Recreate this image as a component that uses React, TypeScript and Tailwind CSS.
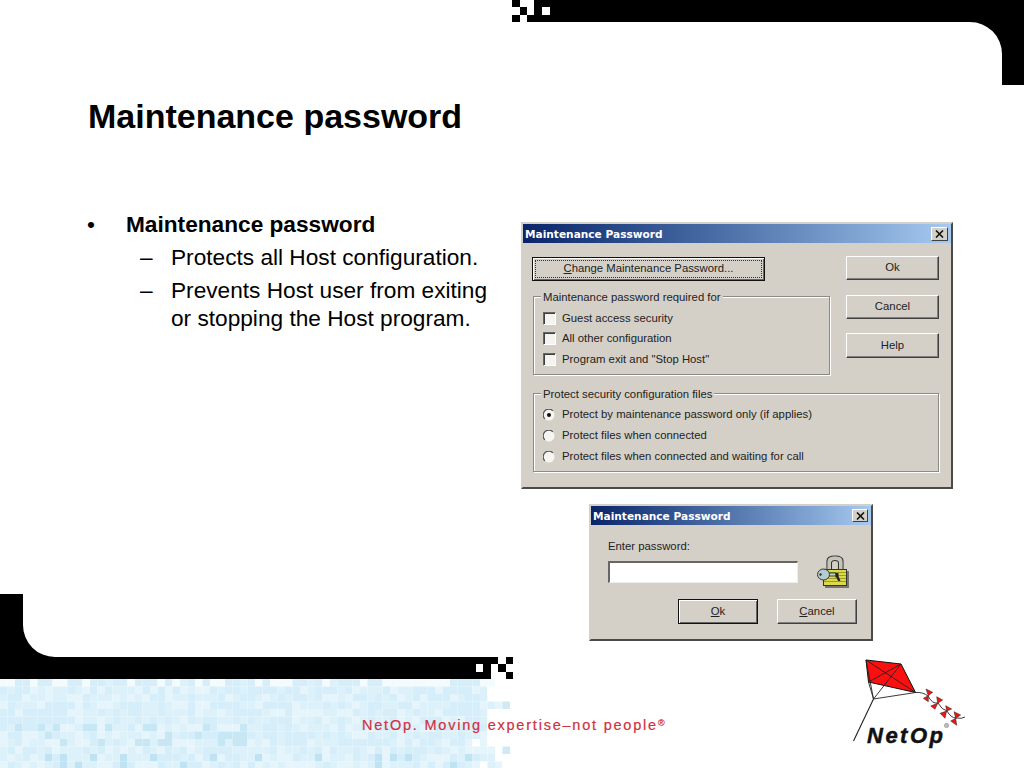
import type { ReactNode } from "react";

const ARIAL = "font-['Liberation_Sans',Arial,sans-serif]";

// pseudo random cells for the pale blue footer pattern
function footerCells() {
  const cells: { x: number; y: number; fill: string }[] = [];
  let seed = 17;
  const rnd = () => {
    seed = (seed * 9301 + 49297) % 233280;
    return seed / 233280;
  };
  for (let row = 0; row < 12; row++) {
    for (let col = 0; col < 69; col++) {
      const x = col * 7.5;
      const y = 679 + row * 7.5;
      const r = rnd();
      let fill = r < 0.4 ? "#d5eef9" : r < 0.75 ? "#dcf1fa" : "#e6f5fb";
      if (row === 0 && r > 0.5) fill = "#f4fbfd";
      if (row >= 10 && r < 0.25 && col % 2 === 0) fill = "#bfe3f2";
      if (col < 34 && row >= 6 && row < 9 && r < 0.2) fill = "#c8e7f4";
      if (x > 470) {
        const fade = (x - 470) / 30;
        if (x >= 500) fill = row % 2 === 1 && r < 0.45 ? "#cfe9f5" : "#ffffff";
        else if (r < fade) fill = "#ffffff";
      }
      cells.push({ x, y, fill });
    }
  }
  return cells;
}

function WinButton({ children, primary, className }: { children: ReactNode; primary?: boolean; className: string }) {
  return (
    <button
      className={`flex items-center justify-center text-[11.33px] leading-none text-[#222] bg-[#d4d0c8] ${
        primary
          ? "border border-[#111] shadow-[inset_1px_1px_0_#fff,inset_-1px_-1px_0_#666]"
          : "border-t border-l border-white border-r border-b border-r-[#404040] border-b-[#404040] shadow-[inset_-1px_-1px_0_#808080]"
      } ${className}`}
    >
      {children}
    </button>
  );
}

function TitleBar({ closeSize }: { closeSize: string }) {
  return (
    <div className="flex h-[19px] items-center justify-between bg-gradient-to-r from-[#0a246a] to-[#a6caf0] pl-[2px] pr-[3px]">
      <span className="pt-[1px] font-['DejaVu_Sans',sans-serif] text-[10.6px] font-bold leading-none text-white">
        Maintenance Password
      </span>
      <span className={`flex items-center justify-center border-t border-l border-white border-r border-b border-r-[#404040] border-b-[#404040] bg-[#d4d0c8] ${closeSize}`}>
        <svg width="9" height="8" viewBox="0 0 9 8">
          <path d="M1 0.5 L8 7.5 M8 0.5 L1 7.5" stroke="#111" strokeWidth="1.6" fill="none" />
        </svg>
      </span>
    </div>
  );
}

function GroupBox({ legend, className, children }: { legend: string; className: string; children: ReactNode }) {
  return (
    <div className={`relative border border-[#8c8a85] shadow-[inset_1px_1px_0_#fff,1px_1px_0_#fff] ${className}`}>
      <span className="absolute left-[7px] top-[-7px] bg-[#d4d0c8] px-[2px] text-[11.33px] leading-[14px] text-[#222]">
        {legend}
      </span>
      {children}
    </div>
  );
}

function CheckRow({ label }: { label: string }) {
  return (
    <div className="flex h-[20.5px] items-center gap-[6px] text-[11.33px] text-[#222]">
      <span className="h-[13px] w-[13px] border-t border-l border-[#666] border-r border-b border-r-white border-b-white bg-[#f4f3f0] shadow-[inset_1px_1px_0_#404040]" />
      <span>{label}</span>
    </div>
  );
}

function RadioRow({ label, checked }: { label: string; checked?: boolean }) {
  return (
    <div className="flex h-[21px] items-center gap-[7px] text-[11.33px] text-[#222]">
      <svg width="12" height="12" viewBox="0 0 12 12">
        <circle cx="6" cy="6" r="5.5" fill="#f6f5f2" />
        <path d="M1.8 9.8 A5.4 5.4 0 0 1 9.8 1.8" stroke="#555" strokeWidth="1.2" fill="none" />
        {checked && <circle cx="6" cy="6" r="2" fill="#111" />}
      </svg>
      <span>{label}</span>
    </div>
  );
}

function LockIcon() {
  return (
    <svg width="32" height="33" viewBox="0 0 32 33">
      <path d="M10 15 V6 Q10 1 18 1 Q26 1 26 6 V15" fill="none" stroke="#333" strokeWidth="1.1" />
      <path d="M14.5 15 V8 Q14.5 5.5 18 5.5 Q21.5 5.5 21.5 8 V15" fill="none" stroke="#333" strokeWidth="1.1" />
      <path d="M12.2 15 V6.8 Q12.2 3.2 18 3.2 Q23.8 3.2 23.8 6.8 V15" fill="none" stroke="#c4c4b8" strokeWidth="2.8" />
      <rect x="6.5" y="14.5" width="23" height="16" fill="#dcd94a" stroke="#333" />
      <path d="M7 17.5 H29 M7 20.5 H29 M7 23.5 H29 M7 26.5 H29" stroke="#9c9b24" />
      <rect x="30" y="16" width="2" height="16" fill="#77756e" />
      <rect x="8" y="31" width="24" height="2" fill="#77756e" />
      <path d="M11 18 H19 V21 H11 Z" fill="#b8d0d2" stroke="#222" strokeWidth="0.8" />
      <ellipse cx="6.5" cy="19.5" rx="6" ry="5.5" fill="#b4ccd0" stroke="#333" />
      <circle cx="3.5" cy="19.5" r="1.2" fill="#333" />
      <path d="M18.5 18 H21.5 V21 L23.5 26 H21 L19.5 22.5 H18.5 Z" fill="#222" />
    </svg>
  );
}

function Dialog1() {
  return (
    <div className="h-[267px] w-[432px] border-2 border-t-[#d4d0c8] border-l-[#d4d0c8] border-r-[#4a4a48] border-b-[#4a4a48] bg-[#d4d0c8]">
      <TitleBar closeSize="h-[14px] w-[17px]" />
      <div className="flex pl-[9px] pt-[13px]">
        <div className="w-[314px]">
          <WinButton primary className="mt-[1px] h-[24px] w-[233px]">
            <span className="flex h-[18px] w-[227px] items-center justify-center border border-dotted border-[#333]">
              <span><u>C</u>hange Maintenance Password...</span>
            </span>
          </WinButton>
          <GroupBox legend="Maintenance password required for" className="ml-[1px] mt-[15px] h-[79px] w-[297px] pl-[9px] pt-[11px]">
            <CheckRow label="Guest access security" />
            <CheckRow label="All other configuration" />
            <CheckRow label="Program exit and &quot;Stop Host&quot;" />
          </GroupBox>
        </div>
        <div className="flex flex-col gap-[15px]">
          <WinButton className="h-[24px] w-[93px]">Ok</WinButton>
          <WinButton className="h-[24px] w-[93px]">Cancel</WinButton>
          <WinButton className="mt-[-1px] h-[25px] w-[93px]">Help</WinButton>
        </div>
      </div>
      <GroupBox legend="Protect security configuration files" className="ml-[10px] mt-[18px] h-[79px] w-[406px] pl-[9px] pt-[10px]">
        <RadioRow checked label="Protect by maintenance password only (if applies)" />
        <RadioRow label="Protect files when connected" />
        <RadioRow label="Protect files when connected and waiting for call" />
      </GroupBox>
    </div>
  );
}

function Dialog2() {
  return (
    <div className="h-[137px] w-[284px] border-2 border-t-[#d4d0c8] border-l-[#d4d0c8] border-r-[#4a4a48] border-b-[#4a4a48] bg-[#d4d0c8]">
      <TitleBar closeSize="h-[13px] w-[16px]" />
      <div className="flex pl-[17px] pt-[13px]">
        <div className="w-[209px]">
          <div className="text-[11.33px] leading-[16px] text-[#222]">Enter password:</div>
          <div className="mt-[7px] h-[22px] w-[190px] border-t-2 border-l-2 border-[#666] border-r border-b border-r-[#eee] border-b-[#eee] bg-white" />
        </div>
        <div className="pt-[17px]">
          <LockIcon />
        </div>
      </div>
      <div className="mt-[11px] flex gap-[19px] pl-[87px]">
        <WinButton primary className="h-[25px] w-[80px]">
          <span><u>O</u>k</span>
        </WinButton>
        <WinButton className="h-[25px] w-[80px]">
          <span><u>C</u>ancel</span>
        </WinButton>
      </div>
    </div>
  );
}

function Kite() {
  return (
    <div className="relative h-[92px] w-[118px]">
      <svg width="118" height="92" viewBox="850 655 118 92" className="absolute inset-0">
        <path d="M866 660 L901 664 L915.5 692.5 L868.5 682 Z" fill="#fb0f0f" stroke="#111" strokeWidth="1" />
        <path d="M866 660 L915.5 692.5 M901 664 L868.5 682" stroke="#222" strokeWidth="0.9" fill="none" />
        <path d="M868.5 682 L873.5 699 M901 664 L873.5 699 M866 660 L873.5 699 M915.5 692.5 L873.5 699" stroke="#222" strokeWidth="0.9" fill="none" />
        <path d="M873.5 699 L853.5 741" stroke="#222" strokeWidth="1.1" fill="none" />
        <path d="M915.5 692.5 Q923 692 928 696 Q932 704 938 703 Q942 710 947 711 Q951 718 956 718 Q962 719 965 717" stroke="#222" strokeWidth="0.9" fill="none" />
        <path d="M926 689 L932.7 692.3 L928.3 695.7 L928.3 701.7 L923.3 698.3 L928.3 695.7 Z" fill="#f01414" stroke="#222" strokeWidth="0.5" />
        <path d="M936.7 696.7 L942.7 700 L937.7 703.3 L935 709.3 L930.7 706 L937.7 703.3 Z" fill="#f01414" stroke="#222" strokeWidth="0.5" />
        <path d="M945.7 705.7 L951.7 709 L946.7 711 L945 718.3 L940 713.3 L946.7 711 Z" fill="#f01414" stroke="#222" strokeWidth="0.5" />
        <path d="M954 711.7 L960.7 715 L955.7 718.3 L956.7 725.3 L950.7 721 L955.7 718.3 Z" fill="#f01414" stroke="#222" strokeWidth="0.5" />
        <circle cx="946.5" cy="725.5" r="2.2" fill="#bbb" stroke="#888" strokeWidth="0.5" />
      </svg>
      <span className={`${ARIAL} absolute left-[17px] top-[67px] text-[22px] font-bold italic leading-[28px] tracking-[2.5px] text-[#111] [-webkit-text-stroke:0.5px_#111]`}>
        NetOp
      </span>
    </div>
  );
}

function Footer() {
  return (
    <div className="absolute bottom-0 left-0 h-[174px] w-[1024px]">
      <svg width="1024" height="174" viewBox="0 594 1024 174" className="absolute inset-0">
        {footerCells().map((c, i) => (
          <rect key={i} x={c.x} y={c.y} width="7.5" height="7.5" fill={c.fill} />
        ))}
        <path d="M0 594 H23 V625 A32 32 0 0 0 55 657 H498 V664 H491 V679 H0 Z" fill="#000" />
        <rect x="506" y="657" width="7" height="7" fill="#000" />
        <rect x="498" y="664" width="8" height="8" fill="#000" />
        <rect x="506" y="672" width="7" height="7" fill="#000" />
        <rect x="476" y="664" width="7" height="8" fill="#fff" />
      </svg>
      <span className={`${ARIAL} absolute left-[362px] top-[122px] text-[14.5px] leading-[18px] tracking-[1.78px] text-[#d03040] [-webkit-text-stroke:0.2px_#d03040]`}>
        NetOp. Moving expertise–not people
        <sup className="text-[9px]">®</sup>
      </span>
      <div className="absolute left-[850px] top-[61px]">
        <Kite />
      </div>
    </div>
  );
}

export default function App() {
  return (
    <div className={`${ARIAL} relative h-[768px] w-[1024px] overflow-hidden bg-white`}>
      <Footer />
      <svg width="1024" height="85" viewBox="0 0 1024 85" className="block">
        <path d="M534 0 H1024 V85 H1002 V54 A32 32 0 0 0 970 22 H527 V15 H534 Z" fill="#000" />
        <rect x="512" y="0" width="8" height="7" fill="#000" />
        <rect x="520" y="7" width="7" height="8" fill="#000" />
        <rect x="512" y="15" width="8" height="7" fill="#000" />
        <rect x="542" y="7" width="8" height="8" fill="#fff" />
      </svg>
      <h1 className="pl-[88px] pt-[11px] text-[34px] font-bold leading-[40px] text-black">Maintenance password</h1>
      <div className="relative flex">
        <ul className="w-[521px] pl-[87px] pr-[21px] pt-[74px] text-[22.67px] leading-[28px] text-black">
          <li className="flex">
            <span className="w-[39px]">•</span>
            <span className="font-bold">Maintenance password</span>
          </li>
          <li className="mt-[5px] flex pl-[53px]">
            <span className="w-[31px]">–</span>
            <span>Protects all Host configuration.</span>
          </li>
          <li className="mt-[5px] flex pl-[53px]">
            <span className="w-[31px] shrink-0">–</span>
            <span>Prevents Host user from exiting or stopping the Host program.</span>
          </li>
        </ul>
        <div className="flex flex-col pt-[86px]">
          <Dialog1 />
          <div className="ml-[68px] mt-[15px]">
            <Dialog2 />
          </div>
        </div>
      </div>
    </div>
  );
}
